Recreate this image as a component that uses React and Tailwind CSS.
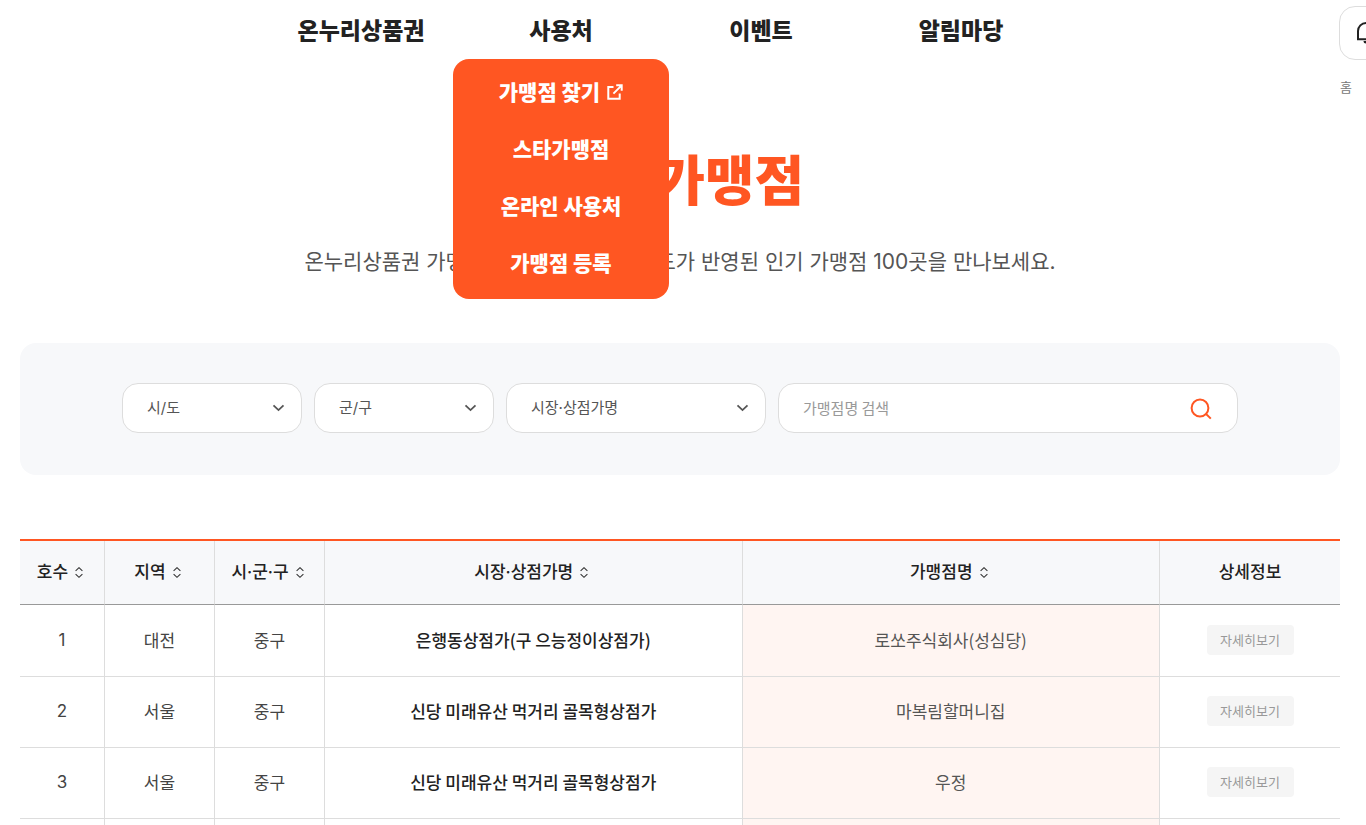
import React, { useState } from 'react';

const menus = ['온누리상품권', '사용처', '이벤트', '알림마당'];

const subMenus = [
  { label: '가맹점 찾기', external: true },
  { label: '스타가맹점' },
  { label: '온라인 사용처' },
  { label: '가맹점 등록' },
];

const columns = [
  { label: '호수', width: 'w-[85px]', sortable: true },
  { label: '지역', width: 'w-[110px]', sortable: true },
  { label: '시·군·구', width: 'w-[110px]', sortable: true },
  { label: '시장·상점가명', width: '', sortable: true },
  { label: '가맹점명', width: '', sortable: true },
  { label: '상세정보', width: 'w-[180px]', sortable: false },
];

const stores = [
  { no: 1, region: '대전', district: '중구', market: '은행동상점가(구 으능정이상점가)', name: '로쏘주식회사(성심당)' },
  { no: 2, region: '서울', district: '중구', market: '신당 미래유산 먹거리 골목형상점가', name: '마복림할머니집' },
  { no: 3, region: '서울', district: '중구', market: '신당 미래유산 먹거리 골목형상점가', name: '우정' },
  { no: 4, region: '서울', district: '중구', market: '신당 미래유산 먹거리 골목형상점가', name: '아이러브신당동' },
];

function BellIcon() {
  return (
    <svg width="24" height="26" viewBox="0 0 24 26" fill="none" stroke="#222" strokeWidth="2">
      <path d="M4 19.3V11a8 8 0 0 1 16 0v8.3z" />
      <path d="M9.5 21h5a2.5 2.5 0 0 1-5 0z" fill="#222" stroke="none" />
    </svg>
  );
}

function ExternalIcon() {
  return (
    <svg width="16" height="16" viewBox="0 0 16 16" fill="none" stroke="currentColor" strokeWidth="2">
      <path d="M6.5 3H1.3v11.7h11.4V9.5" />
      <path d="M9.2 1.3h5.5v5.5M14.4 1.6 6.4 9.6" />
    </svg>
  );
}

function SortIcon() {
  return (
    <svg width="8" height="12" viewBox="0 0 8 12" fill="none" stroke="#333" strokeWidth="1.1">
      <path d="M.6 3.9 4 .7l3.4 3.2M.6 7.1 4 10.3l3.4-3.2" />
    </svg>
  );
}

function SearchIcon() {
  return (
    <svg width="24" height="24" viewBox="0 0 24 24" fill="none" stroke="#ff5622" strokeWidth="2">
      <circle cx="11" cy="12" r="8.4" />
      <path d="m16.8 17.8 5 4.8" />
    </svg>
  );
}

function SelectBox({ label, className }) {
  return (
    <div className={`relative ${className}`}>
      <select
        aria-label={label}
        className="block h-[50px] w-full appearance-none rounded-2xl border border-[#ddd] bg-white pr-11 pl-6 font-['Inter','Noto_Sans_CJK_KR',sans-serif] text-[15px] text-[#555]"
      >
        <option>{label}</option>
      </select>
      <svg
        className="pointer-events-none absolute right-[17px] top-5"
        width="13"
        height="10"
        viewBox="0 0 13 10"
        fill="none"
        stroke="#555"
        strokeWidth="1.8"
      >
        <path d="m1.5 2.3 5 4.8 5-4.8" />
      </svg>
    </div>
  );
}

function Header() {
  return (
    <header className="flex h-[58px] items-center pl-[261px]">
      <nav>
        <ul className="flex">
          {menus.map((menu) => (
            <li key={menu} className="relative w-[200px] text-center">
              <a href="#" className="block text-[23px] leading-[58px] font-black text-[#222]">{menu}</a>
              {menu === '사용처' && (
                <ul className="absolute -left-2 top-[59px] z-10 w-[216px] rounded-2xl bg-[#ff5622] pt-1 pb-2">
                  {subMenus.map((item) => (
                    <li key={item.label}>
                      <a
                        href="#"
                        className="flex h-[57px] items-center justify-center gap-[7px] text-[21px] font-black text-white"
                      >
                        {item.label}
                        {item.external && <ExternalIcon />}
                      </a>
                    </li>
                  ))}
                </ul>
              )}
            </li>
          ))}
        </ul>
      </nav>
      <button
        type="button"
        aria-label="알림"
        className="-mr-[27px] mt-2 ml-auto flex h-[54px] w-[54px] shrink-0 items-center justify-center rounded-2xl border border-[#ddd] bg-white"
      >
        <BellIcon />
      </button>
    </header>
  );
}

function App() {
  const [keyword, setKeyword] = useState('');

  return (
    <div className="h-screen overflow-hidden bg-white font-['Noto_Sans_CJK_KR',sans-serif] text-[#222]">
      <Header />

      <div className="flex justify-end pt-5 pr-[14px]">
        <a href="#" className="text-[13px] leading-[18px] text-[#777]">홈</a>
      </div>

      <main className="mr-[26px] ml-5">
        <h1 className="mt-[42px] text-center text-[54px] leading-[80px] font-black text-[#ff5622]">스타가맹점</h1>
        <p className="mt-7 text-center font-['Inter','Noto_Sans_CJK_KR',sans-serif] text-[21px] leading-[32px] text-[#555]">
          온누리상품권 가맹점 중에서 국민의 선호도가 반영된 인기 가맹점 100곳을 만나보세요.
        </p>

        <form className="mt-[65px] flex justify-center gap-3 rounded-2xl bg-[#f7f8fa] pt-10 pb-[42px]">
          <SelectBox label="시/도" className="w-[180px]" />
          <SelectBox label="군/구" className="w-[180px]" />
          <SelectBox label="시장·상점가명" className="w-[260px]" />
          <div className="flex h-[50px] w-[460px] items-center rounded-2xl border border-[#ddd] bg-white px-6">
            <input
              type="text"
              aria-label="가맹점명 검색"
              placeholder="가맹점명 검색"
              value={keyword}
              onChange={(e) => setKeyword(e.target.value)}
              className="min-w-0 flex-1 text-[15px] outline-none placeholder:text-[#999]"
            />
            <button type="button" aria-label="검색">
              <SearchIcon />
            </button>
          </div>
        </form>

        <table className="mt-16 w-full table-fixed border-separate border-spacing-0 border-t-2 border-[#ff5622] text-center text-[17px]">
          <thead className="font-['Inter','Noto_Sans_CJK_KR',sans-serif]">
            <tr>
              {columns.map((col) => (
                <th
                  key={col.label}
                  scope="col"
                  className={`h-16 border-r border-b border-r-[#ddd] border-b-[#999] bg-[#f7f8fa] p-0 font-medium last:border-r-0 ${col.width}`}
                >
                  {col.sortable ? (
                    <button type="button" className="inline-flex items-center gap-[7px] pr-1">
                      {col.label}
                      <SortIcon />
                    </button>
                  ) : (
                    col.label
                  )}
                </th>
              ))}
            </tr>
          </thead>
          <tbody className="[&_td]:h-[71px] [&_td]:border-r [&_td]:border-b [&_td]:border-[#ddd] [&_td]:pb-[2px] [&_td:last-child]:border-r-0 [&_tr:first-child_td]:h-[72px]">
            {stores.map((store) => (
              <tr key={store.no} className="text-[#444]">
                <td><span className="font-['Inter',sans-serif]">{store.no}</span></td>
                <td>{store.region}</td>
                <td>{store.district}</td>
                <td className="font-medium text-[#222]">{store.market}</td>
                <td className="bg-[#fff5f2] text-[#555]">{store.name}</td>
                <td>
                  <button type="button" className="h-[30px] w-[87px] rounded bg-[#f5f5f5] text-[13px] text-[#999]">
                    자세히보기
                  </button>
                </td>
              </tr>
            ))}
          </tbody>
        </table>
      </main>
    </div>
  );
}

export default App;
